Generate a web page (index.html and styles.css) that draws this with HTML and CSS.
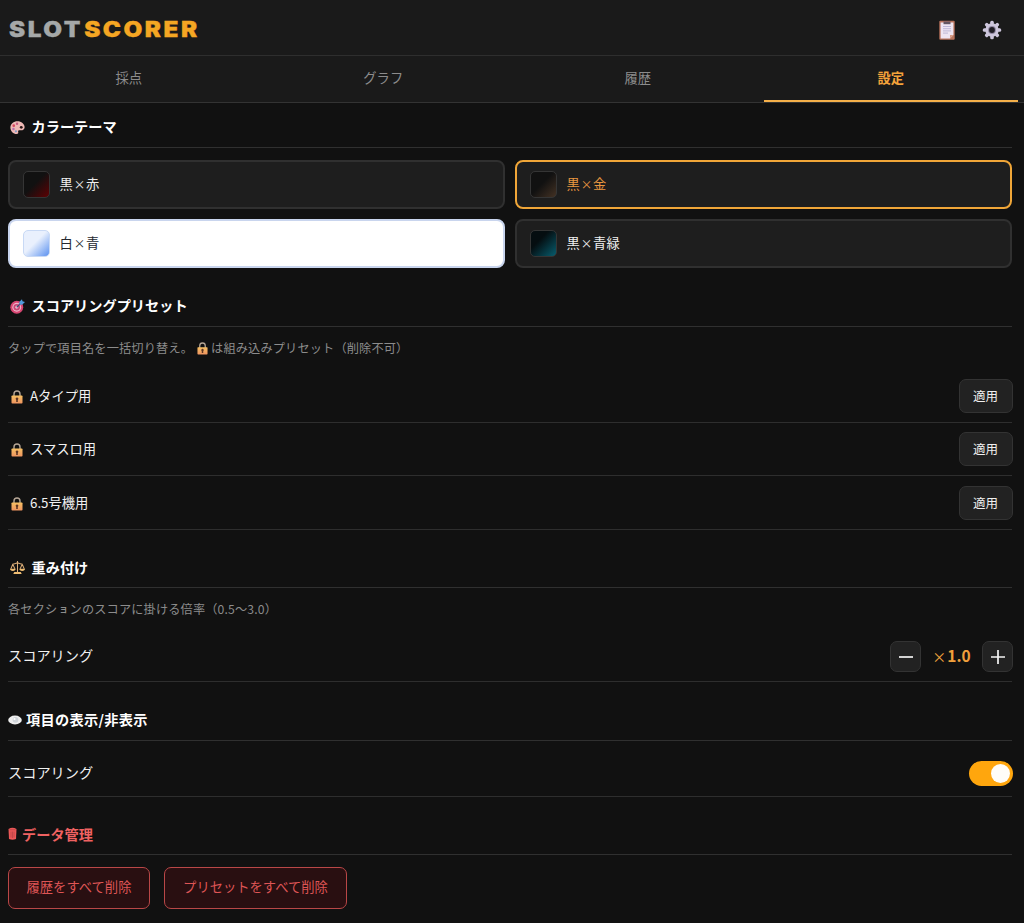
FILE: index.html
```html
<!DOCTYPE html>
<html lang="ja">
<head>
<meta charset="utf-8">
<title>SLOTSCORER</title>
<link rel="stylesheet" href="styles.css">
</head>
<body>
<svg class="defs" width="0" height="0">
  <defs>
    <linearGradient id="lockFill" x1="0" y1="0" x2="0" y2="1"><stop offset="0" stop-color="#f7c062"/><stop offset="1" stop-color="#ee9460"/></linearGradient>
    <symbol id="lock" viewBox="0 0 12 14">
      <path d="M3 6.500V4a3 3 0 0 1 6 0v2.500" fill="none" stroke="#b5a595" stroke-width="1.400"/>
      <rect x=".5" y="5.500" width="11" height="8" rx=".8" fill="url(#lockFill)"/>
      <path d="M6 7.400a1.400 1.400 0 0 1 .8 2.500v2H5.200v-2A1.400 1.400 0 0 1 6 7.400z" fill="#5c3523"/>
    </symbol>
  </defs>
</svg>
<header class="header">
  <h1 class="logo"><span class="logo-slot">SLOT</span><span class="logo-scorer">SCORER</span></h1>
  <div class="actions">
    <svg class="clip" viewBox="0 0 16 20">
      <rect x=".3" y=".8" width="15.400" height="19" rx="1" fill="#b9735c"/>
      <path d="M1.600 2.500h12.800v12.500l-3.400 3.400H1.600z" fill="#eee5f2"/>
      <path d="M11 18.400V15h3.400z" fill="#d69a83"/>
      <path d="M4.500 1.500h7v2.700h-7z" fill="#655762"/>
      <path d="M4 6.500h8M4 8.700h8M4 10.900h8M4 13.100h5" stroke="#b8b2d2" stroke-width=".9"/>
    </svg>
    <svg class="gear" viewBox="0 0 20 20">
      <g fill="#cdc6dc">
        <g id="teeth"><rect x="8.200" y=".8" width="3.600" height="18.400" rx="1.500"/><rect x=".8" y="8.200" width="18.400" height="3.600" rx="1.500"/></g>
        <use href="#teeth" transform="rotate(45 10 10)"/>
        <circle cx="10" cy="10" r="6.700"/>
      </g>
      <circle cx="10" cy="10" r="3.900" fill="#8f86a0"/>
      <circle cx="10" cy="10" r="2.900" fill="#201d25"/>
    </svg>
  </div>
</header>
<nav class="tabs">
  <div class="tab">採点</div><div class="tab">グラフ</div><div class="tab">履歴</div><div class="tab active">設定</div>
</nav>
<main class="main">
  <section>
    <h2 class="title">
      <svg class="ico" viewBox="0 0 16 16"><path d="M8 1.200C4 1.200.4 4 .4 8S3.600 15 7 15c2 0 2-1.400 1.700-2.400-.3-1.300.5-2 2-1.700 2.500.5 4.900-.6 4.900-3.200C15.600 4 12 1.200 8 1.200z" fill="#f0b9b5"/><circle cx="4" cy="6" r="1.400" fill="#d9485f"/><circle cx="7.500" cy="4" r="1.300" fill="#c65b83"/><circle cx="3.700" cy="9.500" r="1.300" fill="#b66fae"/><circle cx="6.300" cy="12" r="1.200" fill="#7f9dc8"/><circle cx="12" cy="7.800" r="1.500" fill="#2b1717"/></svg>
      <span>カラーテーマ</span></h2>
    <div class="themes">
      <div class="theme"><i class="swatch red"></i><span>黒<span class="times">×</span>赤</span></div>
      <div class="theme chosen"><i class="swatch gold"></i><span>黒<span class="times">×</span>金</span></div>
      <div class="theme light"><i class="swatch blue"></i><span>白<span class="times">×</span>青</span></div>
      <div class="theme"><i class="swatch teal"></i><span>黒<span class="times">×</span>青緑</span></div>
    </div>
  </section>
  <section class="presets">
    <h2 class="title">
      <svg class="ico" viewBox="0 0 16 16"><circle cx="7.200" cy="8.800" r="6.900" fill="#d94672"/><circle cx="7.200" cy="8.800" r="4.700" fill="#efb6c8"/><circle cx="7.200" cy="8.800" r="3.500" fill="#c94676"/><circle cx="7.200" cy="8.800" r="1.500" fill="#f1c4d2"/><path d="M7.200 8.800L12 4" stroke="#384f77" stroke-width="1.200"/><path d="M9.800 3.200L12.800.2l.5 2.300 2.700.7-3.100 3-2.700-.3z" fill="#4f9bdc"/></svg>
      <span>スコアリングプリセット</span></h2>
    <p class="hint">タップで項目名を一括切り替え。<svg class="lock-sm"><use href="#lock"/></svg>は組み込みプリセット（削除不可）</p>
    <div class="row"><svg class="lock"><use href="#lock"/></svg><span>Aタイプ用</span><button class="apply">適用</button></div>
    <div class="row"><svg class="lock"><use href="#lock"/></svg><span>スマスロ用</span><button class="apply">適用</button></div>
    <div class="row"><svg class="lock"><use href="#lock"/></svg><span>6.5号機用</span><button class="apply">適用</button></div>
  </section>
  <section class="weights">
    <h2 class="title">
      <svg class="ico scales" viewBox="0 0 16 16" fill="none" stroke="#dcae78" stroke-width="1.100"><path d="M8 1v12M2.500 4.500Q5 4.500 8 3q3 1.500 5.500 1.500M3 4.500L.9 9.500M3 4.500l2.200 5M13 4.500l-2.200 5M13 4.500l2.200 5"/><path d="M0 9.300h6a3 2.300 0 0 1-6 0zM10 9.300h6a3 2.300 0 0 1-6 0zM4.500 12.700h7l1 2.300h-9z" fill="#eebc72" stroke="none"/></svg>
      <span class="low">重み付け</span></h2>
    <p class="hint">各セクシ<span class="small-yo">ョ</span>ンのスコアに掛ける倍率（0.5〜3.0）</p>
    <div class="row setting"><span>スコアリング</span>
      <div class="stepper"><button class="step"><svg viewBox="0 0 14 14"><path d="M0 8h14"/></svg></button><b class="value"><span class="value-times">×</span>1.0</b><button class="step"><svg viewBox="0 0 14 14"><path d="M0 8h14M7 1v14"/></svg></button></div>
    </div>
  </section>
  <section class="visibility">
    <h2 class="title tight">
      <svg class="eye" viewBox="0 0 14 10"><ellipse cx="7" cy="5" rx="6.800" ry="4.400" fill="#eee"/><circle cx="7.500" cy="4.800" r="2.900" fill="#cfd3d8"/><circle cx="6.500" cy="4" r="1.100" fill="#fff"/></svg>
      <span class="spaced">項目の表示/非表示</span></h2>
    <div class="row setting toggle-row"><span>スコアリング</span><div class="toggle"><i class="knob"></i></div></div>
  </section>
  <section class="data">
    <h2 class="title tight danger">
      <svg class="bin" viewBox="0 0 9 13"><path d="M.5 2Q4.500-.4 8.500 2L8 11.900q-3.500 1.500-7 0z" fill="#ec5858"/><path d="M1.500 2.800h6M3 4.500v6M4.500 4.500v6.500M6 4.500v6" stroke="#a83c40" stroke-width=".6"/></svg>
      <span class="low">データ管理</span></h2>
    <div class="deletes"><button class="delete w1">履歴をすべて削除</button><button class="delete w2">プリセットをすべて削除</button></div>
  </section>
</main>
</body>
</html>
```
FILE: styles.css
```css
* { box-sizing: border-box; margin: 0; padding: 0; }
body { height: 923px; overflow: hidden; background: #111; color: #f0f0f0; font-family: "Noto Sans CJK JP", sans-serif; font-size: 13.300px; line-height: 20px; }
button { font: inherit; color: inherit; }
svg { flex: none; display: block; }
.defs { position: absolute; }
.header { height: 56px; background: #1a1a1a; border-bottom: 1px solid #2e2e2e; display: flex; align-items: center; justify-content: space-between; padding: 4px 22px 0 9px; }
.logo { font: 900 21px/28px Inter, sans-serif; letter-spacing: 2.200px; transform: scaleX(1.155); transform-origin: 0 50%; }
.logo-slot { color: #a5a8a8; -webkit-text-stroke: .3px #a5a8a8; }
.logo-scorer { color: #f5a623; -webkit-text-stroke: .3px #f5a623; margin-left: 1px; }
.actions { display: flex; align-items: center; gap: 27px; padding-top: 1px; }
.clip { width: 16px; height: 20px; }
.gear { width: 20px; height: 20px; }
.tabs { height: 47px; background: #1a1a1a; border-bottom: 1px solid #333; display: flex; padding-right: 6px; }
.tab { width: 25%; height: 46px; text-align: center; line-height: 43px; padding-left: 3px; color: #8c8c8c; border-bottom: 2px solid transparent; }
.tab.active { padding-left: 0; color: #f5a33b; font-weight: 700; border-color: #f5b04a; }
.main { padding: 4px 12px 0 8px; }
.title { height: 41px; border-bottom: 1px solid #303030; display: flex; align-items: center; gap: 6.500px; font-size: 14.200px; font-weight: 700; color: #fff; }
.title span { padding-bottom: 1.500px; }
.title .low { padding-bottom: 0; }
.title.tight { gap: 5px; }
.title.danger { color: #f06262; }
.spaced { letter-spacing: .3px; }
.ico { width: 15px; height: 15px; margin-left: 2px; }
.scales { margin-top: 2px; }
.eye { width: 14px; height: 10px; margin-right: -1px; }
.bin { width: 9px; height: 13px; }
.themes { display: grid; grid-template-columns: 1fr 1fr; gap: 10px; padding-top: 12px; }
.theme { height: 49px; border: 2px solid #303030; border-radius: 8px; background: #1e1e1e; display: flex; align-items: center; gap: 9.500px; padding-left: 13px; }
.theme > span { padding-bottom: 2px; }
.times { display: inline-block; width: 13.300px; text-align: center; font-size: 11.500px; }
.theme.chosen { border-color: #f0a638; color: #e89640; }
.theme.light { background: #fff; border-color: #c9d5ee; color: #25282f; }
.swatch { width: 27px; height: 27px; border: 1px solid #353535; border-radius: 5px; }
.red { background: linear-gradient(135deg, #111 45%, #5e0003); }
.gold { background: linear-gradient(135deg, #111 45%, #443224); }
.blue { background: linear-gradient(135deg, #e9f0fd 45%, #5c92f0); border-color: #c8d9f5; }
.teal { background: linear-gradient(135deg, #050d10 35%, #075d6e); }
.presets { padding-top: 18px; }
.hint { height: 42px; font-size: 12.200px; letter-spacing: .15px; line-height: 42px; color: #8c8c8c; display: flex; align-items: center; }
.lock-sm { width: 11px; height: 13px; margin: 0 3px 0 4px; }
.row { height: 53.670px; border-bottom: 1px solid #2e2e2e; display: flex; align-items: center; padding-top: 1px; }
.lock { width: 12px; height: 14px; margin: 2px 7px 0 3px; }
.apply { width: 54px; height: 34px; margin: 0 -1px 0 auto; background: #222; border: 1px solid #333; border-radius: 7px; font-size: 12.500px; padding-right: 1px; }
.weights { padding-top: 17px; }
.small-yo { font-weight: 700; font-size: 9px; width: 12.200px; text-align: center; }
.setting { justify-content: space-between; font-size: 14.200px; height: 52px; }
.setting > span { padding-bottom: 2px; }
.stepper { display: flex; align-items: center; margin-right: -1px; padding-top: 1px; }
.step { width: 31px; height: 31px; background: #222; border: 1px solid #333; border-radius: 7px; display: grid; place-items: center; }
.step svg { width: 14px; height: 14px; overflow: visible; stroke: #f4f4f4; stroke-width: 1.700; }
.value { width: 61px; text-align: center; color: #f0a03c; font-size: 15.500px; padding-bottom: 2px; }
.value-times { font-weight: 400; font-size: 14px; margin-right: 1px; }
.visibility { padding-top: 18px; }
.toggle-row { height: 56px; padding-top: 10px; }
.toggle { width: 44px; height: 25px; margin-right: -.5px; border-radius: 13px; background: #ffa60d; display: flex; align-items: center; justify-content: flex-end; padding-right: 3px; }
.knob { width: 19px; height: 19px; border-radius: 50%; background: #fffdf8; }
.data { padding-top: 17px; }
.deletes { display: flex; gap: 14px; padding-top: 12px; }
.delete { height: 42px; border: 1px solid #b94747; border-radius: 7px; background: #290f11; color: #de5555; padding-bottom: 1px; }
.w1 { width: 142px; }
.w2 { width: 183px; }
```
